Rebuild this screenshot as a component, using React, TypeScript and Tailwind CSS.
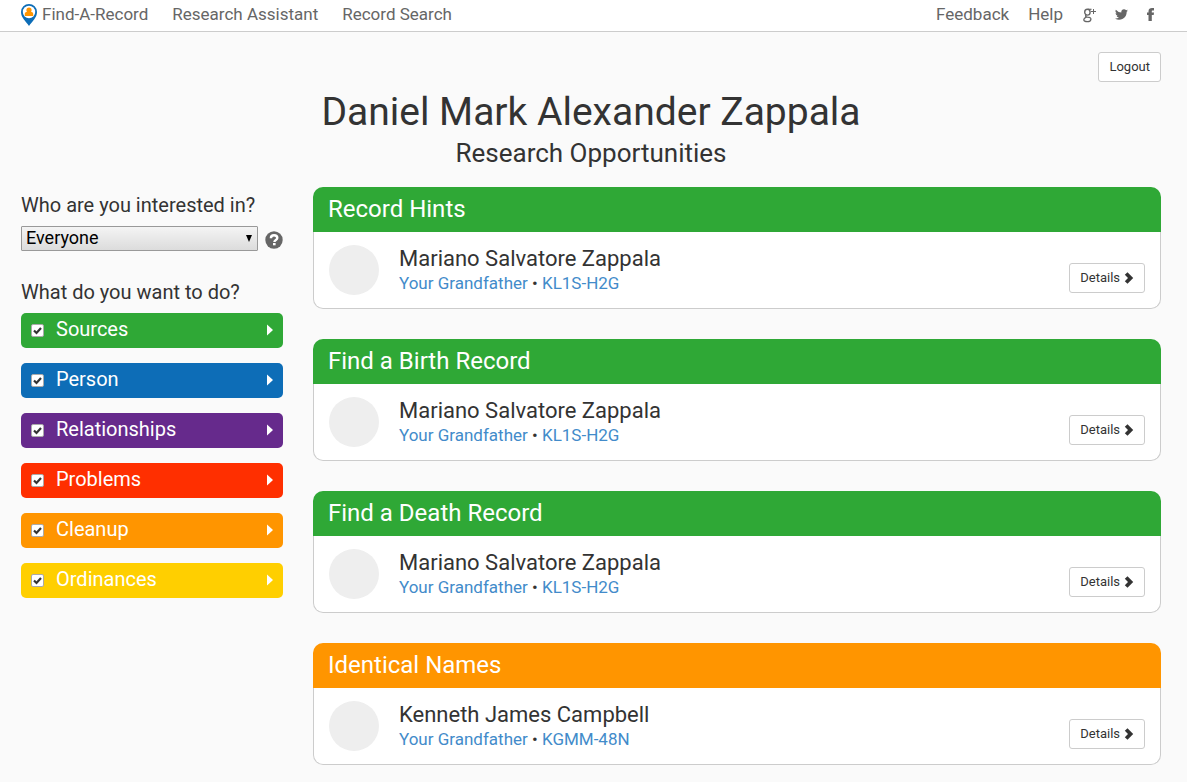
import { useState } from 'react';

const categories = [
  { name: 'Sources', color: 'bg-[#2fa836]' },
  { name: 'Person', color: 'bg-[#0d6db7]' },
  { name: 'Relationships', color: 'bg-[#662a8c]' },
  { name: 'Problems', color: 'bg-[#ff2f00]' },
  { name: 'Cleanup', color: 'bg-[#ff9500]' },
  { name: 'Ordinances', color: 'bg-[#ffcf00]' },
];

const opportunities = [
  { title: 'Record Hints', color: 'bg-[#2fa836]', person: 'Mariano Salvatore Zappala', id: 'KL1S-H2G' },
  { title: 'Find a Birth Record', color: 'bg-[#2fa836]', person: 'Mariano Salvatore Zappala', id: 'KL1S-H2G' },
  { title: 'Find a Death Record', color: 'bg-[#2fa836]', person: 'Mariano Salvatore Zappala', id: 'KL1S-H2G' },
  { title: 'Identical Names', color: 'bg-[#ff9500]', person: 'Kenneth James Campbell', id: 'KGMM-48N' },
];

function PinLogo() {
  return (
    <svg viewBox="0 0 16 22" className="h-[22px] w-4 shrink-0" aria-hidden="true">
      <path d="M8 0a8 8 0 0 0-8 8c0 3 1.200 5 2.700 7.200C4.500 17.700 6.500 19.500 8 22c1.500-2.500 3.500-4.300 5.300-6.800C14.800 13 16 11 16 8a8 8 0 0 0-8-8z" fill="#0d6db7" />
      <circle cx="8" cy="8" r="6.200" fill="#fff" />
      <circle cx="8" cy="6" r="2.600" fill="#ff9500" />
      <path d="M3.800 12V9.800C3.800 8.500 5 7.800 6.500 7.800h3c1.500 0 2.700.7 2.700 2V12z" fill="#ff9500" />
    </svg>
  );
}

function GooglePlusIcon() {
  return (
    <svg viewBox="0 0 14 16" className="h-4 w-3.5" fill="none" stroke="#666" aria-hidden="true">
      <ellipse cx="5.400" cy="5.200" rx="2.700" ry="2.900" strokeWidth="1.400" />
      <path d="M5.800 2.300H9.500" strokeWidth="1.200" />
      <path d="M4.300 7.800C2.800 9.300 3.600 9.900 5.500 10.100c2.500.2 3.600.7 3.400 2.200-.2 1.500-1.800 2.400-3.700 2.400-2 0-3.400-.7-3.400-2 0-1.200 1.100-1.900 2.400-2.600" strokeWidth="1.300" />
      <path d="M11.500 2v5M9 4.500h5" />
    </svg>
  );
}

function TwitterIcon() {
  return (
    <svg viewBox="0 0 24 24" className="h-[13px] w-[13px]" fill="#666" aria-hidden="true">
      <path d="M24 4.600a10 10 0 0 1-2.800.8 5 5 0 0 0 2.100-2.700 10 10 0 0 1-3.100 1.200 4.900 4.900 0 0 0-8.400 4.500A14 14 0 0 1 1.700 3.100a4.900 4.900 0 0 0 1.500 6.600 5 5 0 0 1-2.200-.6 4.900 4.900 0 0 0 3.900 4.900 5 5 0 0 1-2.200.1 4.900 4.900 0 0 0 4.600 3.400A9.900 9.900 0 0 1 0 19.500a14 14 0 0 0 21.500-12.400A10 10 0 0 0 24 4.600z" />
    </svg>
  );
}

function FacebookIcon() {
  return (
    <svg viewBox="0 0 8 13" className="h-[13px] w-2" fill="#666" aria-hidden="true">
      <path d="M1.500 13V7H0V4.500h1.500V3.200C1.500 1 2.900 0 5 0h2v2.400H5.800c-.8 0-1 .4-1 1v1.100H7L6.700 7H4.800v6z" />
    </svg>
  );
}

function QuestionIcon() {
  return (
    <svg viewBox="0 0 18 18" className="h-[18px] w-[18px]" aria-hidden="true">
      <circle cx="9" cy="9" r="8.700" fill="#666" />
      <path d="M5.900 7.200C5.900 5 7.200 4.200 9 4.200s3.300 1 3.300 2.700c0 2-2.900 2-2.900 4" fill="none" stroke="#fff" strokeWidth="2.400" />
      <path d="M8 12h2.600v2.300H8z" fill="#fff" />
    </svg>
  );
}

function ChevronIcon() {
  return (
    <svg viewBox="0 0 10 12" className="h-3 w-2.5" fill="#333" aria-hidden="true">
      <path d="M3.500.3 9.200 6l-5.700 5.700L.8 9.200 4 6 .8 2.800z" />
    </svg>
  );
}

const buttonStyle = 'flex h-[30px] items-center gap-1 rounded-[3px] border border-[#ccc] bg-white px-2.5 text-[13px] text-[#333]';

function Category({ name, color }: { name: string; color: string }) {
  const [checked, setChecked] = useState(true);
  return (
    <div className={`flex h-[35px] items-center rounded-[5px] px-2.5 pb-0.5 text-white ${color}`}>
      <label className="flex flex-1 items-center gap-3 pb-0.5 text-[20px] leading-6">
        <span className="relative mt-1 flex h-[13px] w-[13px]">
          <input
            type="checkbox"
            checked={checked}
            onChange={() => setChecked(!checked)}
            className="h-[13px] w-[13px] appearance-none rounded-[2px] border border-[#aaa] bg-white"
          />
          {checked && (
            <svg viewBox="0 0 13 13" className="pointer-events-none absolute inset-0" fill="none" aria-hidden="true">
              <path d="M3 6.500 5.500 9 10 4" stroke="#333" strokeWidth="2.200" />
            </svg>
          )}
        </span>
        {name}
      </label>
      <button type="button" aria-label={`Expand ${name}`}>
        <svg viewBox="0 0 6 12" className="h-3 w-1.5" fill="#fff" aria-hidden="true">
          <path d="M0 .5 6 6l-6 5.500z" />
        </svg>
      </button>
    </div>
  );
}

export default function App() {
  return (
    <div className="min-h-screen bg-[#fafafa] font-[Roboto,sans-serif] text-[#333]">
      <nav className="flex h-8 items-center justify-between border-b border-[#ccc] bg-white pr-8 pb-0.5 pl-[21px] text-[17px] text-[#666]">
        <div className="flex items-center gap-6">
          <a href="#home" className="flex items-center gap-[5px]">
            <PinLogo />
            Find-A-Record
          </a>
          <a href="#assistant">Research Assistant</a>
          <a href="#search">Record Search</a>
        </div>
        <div className="flex items-center gap-[19px]">
          <a href="#feedback">Feedback</a>
          <a href="#help">Help</a>
          <a href="#google" aria-label="Google Plus"><GooglePlusIcon /></a>
          <a href="#twitter" aria-label="Twitter"><TwitterIcon /></a>
          <a href="#facebook" aria-label="Facebook"><FacebookIcon /></a>
        </div>
      </nav>

      <div className="pt-5 pr-[26px] pb-[17px] pl-[21px]">
        <div className="flex justify-end">
          <button type="button" className={buttonStyle}>Logout</button>
        </div>
        <header className="text-center">
          <h1 className="pt-[5px] text-[39px] leading-[50px]">Daniel Mark Alexander Zappala</h1>
          <h2 className="text-[26px] leading-8">Research Opportunities</h2>
        </header>

        <div className="mt-[18px] flex gap-[30px]">
          <aside className="w-[262px] shrink-0 pt-1.5">
            <label htmlFor="interest" className="block text-[20px] leading-6">Who are you interested in?</label>
            <div className="mt-[9px] flex items-center justify-between">
              <span className="relative flex w-[237px]">
                <select
                  id="interest"
                  className="h-[25px] w-full appearance-none rounded-[1px] border border-[#999] bg-linear-to-b from-[#f4f4f4] to-[#dcdcdc] pb-0.5 pl-1 text-[18px] leading-5 text-black"
                >
                  <option>Everyone</option>
                </select>
                <svg viewBox="0 0 6 7" className="pointer-events-none absolute top-[9px] right-1.5 h-[7px] w-1.5" aria-hidden="true">
                  <path d="M0 0h6L3 7z" />
                </svg>
              </span>
              <button type="button" aria-label="Help" className="mt-0.5"><QuestionIcon /></button>
            </div>
            <h3 className="mt-[29px] text-[20px] leading-6">What do you want to do?</h3>
            <div className="mt-[9px] flex flex-col gap-[15px]">
              {categories.map((c) => <Category key={c.name} {...c} />)}
            </div>
          </aside>

          <main className="flex min-w-0 flex-1 flex-col gap-[30px]">
            {opportunities.map((o) => (
              <section key={o.title}>
                <h2 className={`rounded-t-[10px] px-[15px] pb-px text-2xl leading-[44px] text-white ${o.color}`}>{o.title}</h2>
                <div className="flex gap-5 rounded-b-[10px] border border-t-0 border-[#ccc] bg-white px-[15px] py-[13px]">
                  <div className="h-[50px] w-[50px] shrink-0 rounded-full bg-[#eee]" />
                  <div className="flex-1">
                    <h3 className="pt-0.5 text-[22px] leading-6">{o.person}</h3>
                    <p className="text-[17px] leading-6">
                      <a href="#relation" className="text-[#428bca]">Your Grandfather</a>
                      {' • '}
                      <a href="#person" className="text-[#428bca]">{o.id}</a>
                    </p>
                  </div>
                  <button type="button" className={`mt-[18px] ${buttonStyle}`}>
                    Details
                    <ChevronIcon />
                  </button>
                </div>
              </section>
            ))}
          </main>
        </div>
      </div>
    </div>
  );
}
